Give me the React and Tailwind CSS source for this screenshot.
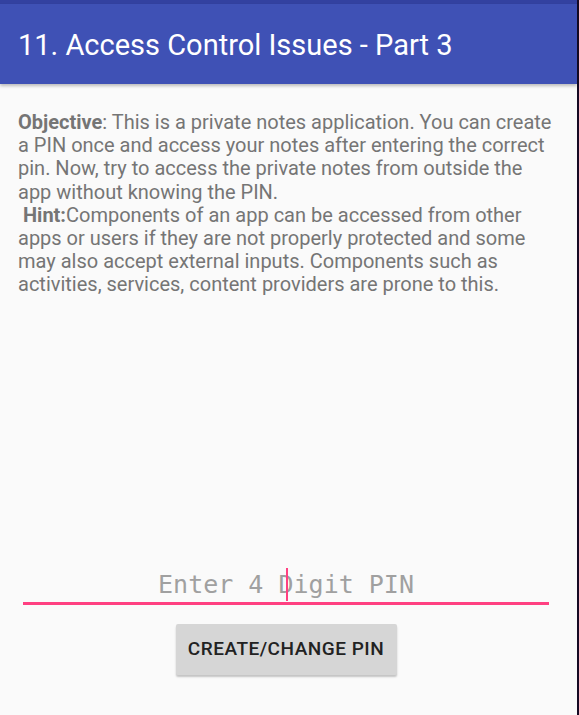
export default function App() {
  return (
    <div className="w-[579px] h-[715px] flex bg-[#fafafa] overflow-hidden" style={{ fontFamily: "Roboto, 'Noto Sans', sans-serif" }}>
      <div className="flex-1 flex flex-col">
        <div className="h-[4px] bg-[#3341a0]" />
        <div className="h-[80px] bg-[#3f51b5] flex items-center px-[18px] pt-[2px] shadow-[0_2px_3px_rgba(0,0,0,0.25)] relative z-10">
          <h1 className="text-white text-[29px] leading-none font-normal">11. Access Control Issues - Part 3</h1>
        </div>
        <div className="px-[18px] pt-[27px] text-[20px] leading-[23.2px] text-[#757575]">
          <p>
            <span className="font-bold">Objective</span>: This is a private notes application. You can create a PIN once and access your notes after entering the correct pin. Now, try to access the private notes from outside the app without knowing the PIN.
            <br />
            <span className="font-bold">&nbsp;Hint:</span>Components of an app can be accessed from other apps or users if they are not properly protected and some may also accept external inputs. Components such as activities, services, content providers are prone to this.
          </p>
        </div>
        <div className="flex-1" />
        <div className="ml-[23px] mr-[28px] border-b-[3px] border-[#ff4081] relative flex justify-center pb-[2px]">
          <span className="text-[25px] leading-[30px] text-[#a0a0a0]" style={{ fontFamily: "'DejaVu Sans Mono', monospace" }}>Enter 4 Digit PIN</span>
          <span className="absolute left-1/2 top-[-2px] w-[2px] h-[33px] bg-[#ff4081]" />
        </div>
        <div className="ml-[23px] mr-[28px] flex justify-center mt-[19px] mb-[40px]">
          <button className="w-[221px] h-[51px] bg-[#d6d6d6] rounded-[2px] shadow-[0_2px_2px_rgba(0,0,0,0.22)] text-[19px] font-medium text-[#222] tracking-[0.5px]">CREATE/CHANGE PIN</button>
        </div>
      </div>
      <div className="w-[2px] bg-[#160a24]" />
    </div>
  );
}
